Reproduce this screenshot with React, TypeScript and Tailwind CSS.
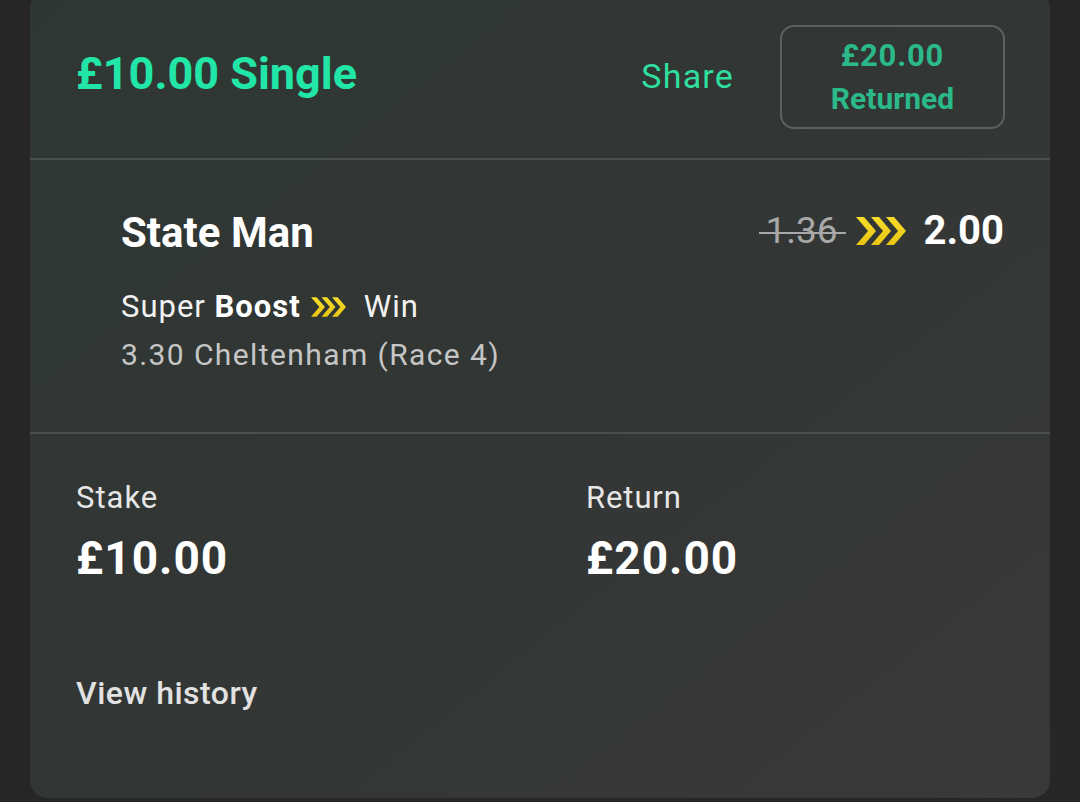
import React from "react";

function Chevrons({ w, h }: { w: number; h: number }) {
  return (
    <svg width={w} height={h} viewBox="0 0 50 28" className="shrink-0">
      <defs>
        <linearGradient id={`cg${w}`} x1="0" y1="0" x2="0" y2="1">
          <stop offset="0" stopColor="#f7dc2a" />
          <stop offset="1" stopColor="#e9c514" />
        </linearGradient>
      </defs>
      {[0, 15, 30].map((o) => (
        <polygon
          key={o}
          fill={`url(#cg${w})`}
          points={`${o},0 ${o + 8},0 ${o + 20},14 ${o + 8},28 ${o},28 ${o + 12},14`}
        />
      ))}
    </svg>
  );
}

export default function App() {
  return (
    <div
      className="w-[1080px] h-[802px] overflow-hidden bg-[#262626] px-[30px]"
      style={{ fontFamily: "Roboto, 'Liberation Sans', sans-serif" }}
    >
      <div className="mt-[-10px] h-[808px] rounded-[18px] bg-gradient-to-br from-[#2f3733] via-[#323634] to-[#393939] flex flex-col">
        {/* header */}
        <div className="flex items-center pl-[46px] pr-[45px] pt-[35px] pb-[29px]">
          <div className="text-[45px] leading-[54px] font-bold text-[#22e6a7] mb-[7px]">£10.00 Single</div>
          <div className="ml-auto text-[34px] leading-[44px] tracking-[1.2px] text-[#2fdf9f] mb-[3px]">Share</div>
          <div className="ml-[46px] w-[225px] h-[104px] rounded-[14px] border-2 border-[#5c615e] flex flex-col items-center justify-center font-bold text-[#2cb98a]">
            <div className="text-[31px] leading-[43px] tracking-[0.8px]">£20.00</div>
            <div className="text-[30px] leading-[43px]">Returned</div>
          </div>
        </div>
        <div className="h-[2px] bg-[#4a504d]" />
        {/* selection */}
        <div className="pl-[91px] pr-[46px] pt-[48px] pb-[55px]">
          <div className="flex items-start">
            <div className="text-[42px] leading-[50px] font-bold text-white">State Man</div>
            <div className="ml-auto flex items-center gap-[18px] mt-[-2px]">
              <span className="relative text-[37px] leading-[50px] text-[#a8a8a8]">
                1.36
                <span className="absolute left-[-6px] right-[-8px] top-[26px] h-[2px] bg-[#a8a8a8]" />
              </span>
              <Chevrons w={50} h={28} />
              <span className="text-[40px] leading-[50px] font-bold text-white">2.00</span>
            </div>
          </div>
          <div className="mt-[27px] flex items-center text-[31px] leading-[44px] tracking-[1px] text-[#f2f2f2]">
            <span>Super&nbsp;</span>
            <span className="font-bold text-white">Boost</span>
            <span className="ml-[10px] mr-[18px] flex items-center">
              <Chevrons w={35} h={20} />
            </span>
            <span>Win</span>
          </div>
          <div className="mt-[4px] text-[30px] leading-[44px] tracking-[1.4px] text-[#c6c6c6]">3.30 Cheltenham (Race 4)</div>
        </div>
        <div className="h-[2px] bg-[#4a504d]" />
        {/* stake / return */}
        <div className="px-[46px] pt-[42px]">
          <div className="grid grid-cols-[510px_1fr]">
            <div>
              <div className="text-[31px] leading-[44px] tracking-[1px] text-[#e6e6e6]">Stake</div>
              <div className="mt-[11px] text-[46px] leading-[54px] tracking-[1px] font-bold text-white">£10.00</div>
            </div>
            <div>
              <div className="text-[31px] leading-[44px] tracking-[0.9px] text-[#e6e6e6]">Return</div>
              <div className="mt-[11px] text-[46px] leading-[54px] tracking-[1px] font-bold text-white">£20.00</div>
            </div>
          </div>
          <div className="mt-[86px] text-[32px] leading-[44px] tracking-[0.5px] font-medium text-[#e2e2e2]">View history</div>
        </div>
      </div>
    </div>
  );
}
